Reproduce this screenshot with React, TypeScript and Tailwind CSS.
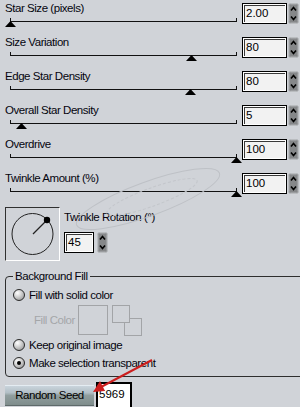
import React from 'react';

type Row = { label: string; value: string; thumb: number };

const rows: Row[] = [
  { label: 'Star Size (pixels)', value: '2.00', thumb: -5 },
  { label: 'Size Variation', value: '80', thumb: 176 },
  { label: 'Edge Star Density', value: '80', thumb: 175 },
  { label: 'Overall Star Density', value: '5', thumb: 6 },
  { label: 'Overdrive', value: '100', thumb: 221 },
  { label: 'Twinkle Amount (%)', value: '100', thumb: 221 },
];

const txt = 'text-[11.5px] leading-[13px] tracking-[-0.45px] text-[#05050f]';

function Spinner() {
  return (
    <svg width="11" height="21" viewBox="0 0 11 21" className="block">
      <rect x="0.5" y="0.5" width="10" height="20" rx="2" fill="#858789" stroke="#b9bcbf" />
      <rect x="1.5" y="1.5" width="8" height="18" rx="1" fill="none" stroke="#9a9c9f" />
      <polyline points="3,7.5 5.5,4.5 8,7.5" fill="none" stroke="#000" strokeWidth="1.6" />
      <polyline points="3,13.5 5.5,16.5 8,13.5" fill="none" stroke="#000" strokeWidth="1.6" />
    </svg>
  );
}

function NumBox({ value, w }: { value: string; w: string }) {
  return (
    <div className={`${w} h-[21px] border border-black bg-white p-[1px]`}>
      <div className="h-full border-t border-l border-[#3a3a3a] bg-[#f2f2f2] pl-[1px] flex items-center text-[11.5px] leading-none text-black">
        {value}
      </div>
    </div>
  );
}

function Thumb() {
  return (
    <svg width="11" height="6" viewBox="0 0 11 6" className="block">
      <polygon points="5.5,0 11,6 0,6" fill="#000" />
    </svg>
  );
}

function SliderRow({ row }: { row: Row }) {
  return (
    <div className="flex h-[34px]">
      <div className="w-[237px] pl-[5px]">
        <div className={`h-[18px] pt-[2px] whitespace-nowrap ${txt}`}>{row.label}</div>
        <div className="relative ml-[5px] w-[227px] h-[4px]">
          <div className="absolute inset-0 border-l border-r border-b border-[#111]" />
          <div className="absolute top-[3px]" style={{ left: row.thumb }}>
            <Thumb />
          </div>
        </div>
      </div>
      <div className="ml-[5px] mt-[3px]">
        <NumBox value={row.value} w="w-[45px]" />
      </div>
      <div className="ml-[1px] mt-[3px]">
        <Spinner />
      </div>
    </div>
  );
}

function Radio({ checked }: { checked?: boolean }) {
  return (
    <div className="w-[12px] h-[12px] rounded-full border border-[#2a2a2a] bg-[radial-gradient(circle_at_35%_30%,#ffffff_0%,#d8d8d8_35%,#8a8a8a_100%)] flex items-center justify-center shrink-0">
      {checked && <div className="w-[4px] h-[4px] rounded-full bg-black" />}
    </div>
  );
}

function RadioRow({ label, checked }: { label: string; checked?: boolean }) {
  return (
    <div className="flex items-center h-[14px] gap-[4px]">
      <Radio checked={checked} />
      <span className={`whitespace-nowrap ${txt}`}>{label}</span>
    </div>
  );
}

export default function App() {
  return (
    <div className="relative w-[300px] h-[407px] overflow-hidden bg-[#d0d3d8] font-['Liberation_Sans',Arial,sans-serif]">
      {rows.map((r) => (
        <SliderRow key={r.label} row={r} />
      ))}

      {/* twinkle rotation */}
      <div className="flex ml-[5px] mt-[3px]">
        <div className="w-[55px] h-[54px] border-t border-l border-[#303030] border-b border-r border-b-white border-r-white">
          <svg width="53" height="52" viewBox="0 0 53 52" className="block">
            <circle cx="26.5" cy="26" r="20.5" fill="none" stroke="#222" strokeWidth="1" />
            <line x1="27" y1="26" x2="41" y2="12" stroke="#222" strokeWidth="1.2" />
            <circle cx="41" cy="12" r="3.2" fill="#000" />
          </svg>
        </div>
        <div className="ml-[4px]">
          <div className={`pt-[4px] h-[25px] whitespace-nowrap ${txt}`}>Twinkle Rotation (°)</div>
          <div className="flex items-start">
            <NumBox value="45" w="w-[30px]" />
            <div className="ml-[3px]">
              <Spinner />
            </div>
          </div>
        </div>
      </div>

      {/* background fill group */}
      <div className="relative mt-[15px] ml-[5px] w-[330px] h-[101px] border border-[#2e2e2e] rounded-[4px] pl-[7px] pt-[11px]">
        <div className={`absolute left-[7px] top-[-7px] px-[2px] bg-[#d0d3d8] ${txt}`}>Background Fill</div>
        <RadioRow label="Fill with solid color" />
        <div className="flex items-center mt-[3px] h-[31px]">
          <span className="ml-[21px] w-[44px] text-[11.5px] leading-[13px] tracking-[-0.45px] text-[#a4a6a9] whitespace-nowrap">
            Fill Color
          </span>
          <div className="w-[30px] h-[30px] border border-[#a2a4a7] self-start" />
          <svg width="31" height="32" viewBox="0 0 31 32" className="ml-[4px] self-start block">
            <rect x="12.5" y="13.5" width="17" height="17" fill="none" stroke="#a2a4a7" />
            <rect x="0.5" y="0.5" width="17" height="17" fill="#d0d3d8" stroke="#a2a4a7" />
          </svg>
        </div>
        <div className="mt-[2px]">
          <RadioRow label="Keep original image" />
        </div>
        <div className="mt-[4px]">
          <RadioRow label="Make selection transparent" checked />
        </div>
      </div>

      {/* random seed */}
      <div className="flex items-start ml-[5px] mt-[5px]">
        <button className="mt-[3px] w-[89px] h-[21px] border-t border-[#e4ecf2] border-b border-b-[#5e6a6a] bg-[linear-gradient(to_bottom,#c9d4dc_0%,#b2bfc6_35%,#909e9e_50%,#7f8d8c_100%)] text-[11.5px] leading-none tracking-[-0.45px] text-black">
          Random Seed
        </button>
        <div className="ml-[2px] w-[36px] h-[27px] border-2 border-black bg-white pl-[1px] pt-[5px] text-[11.5px] leading-none text-black">
          5969
        </div>
      </div>

      {/* watermark */}
      <svg width="300" height="407" className="absolute inset-0 pointer-events-none">
        <ellipse cx="148" cy="199" rx="76" ry="17" transform="rotate(-20 148 199)" fill="none" stroke="#bec1c6" strokeWidth="1" />
        <ellipse cx="152" cy="197" rx="48" ry="9" transform="rotate(-20 152 197)" fill="none" stroke="#c3c6cb" strokeWidth="1" strokeDasharray="3 2" />
      </svg>

      {/* red arrow */}
      <svg width="300" height="407" className="absolute inset-0 pointer-events-none">
        <line x1="152" y1="360" x2="101" y2="387" stroke="#cc1e1e" strokeWidth="2" />
        <polygon points="93,392 100,381 105,391" fill="#cc1e1e" />
      </svg>
    </div>
  );
}
